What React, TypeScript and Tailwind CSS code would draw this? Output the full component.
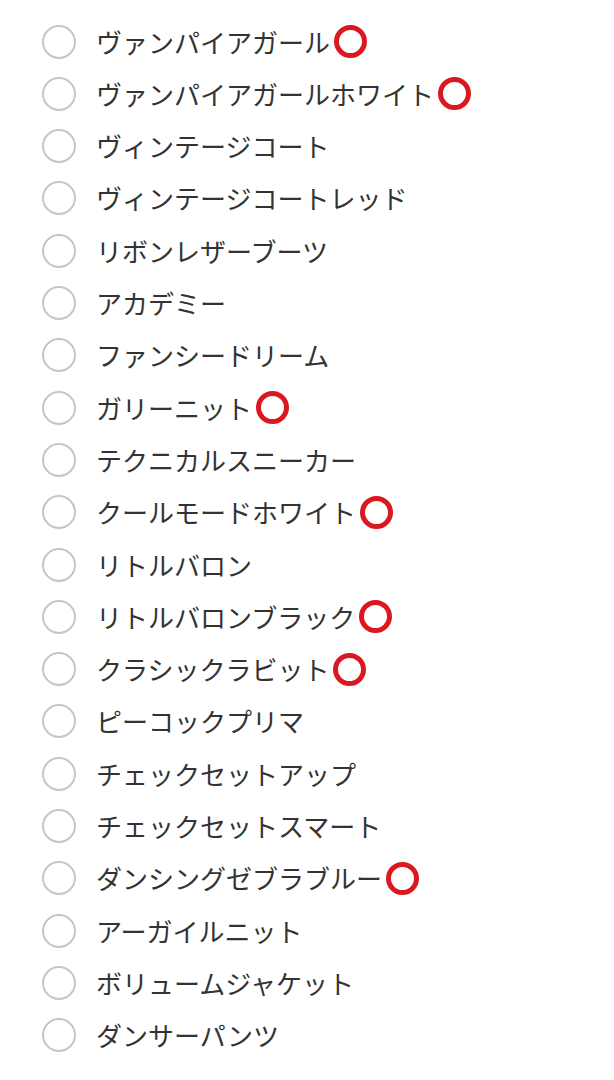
import React from "react";

const items: [string, boolean][] = [
  ["ヴァンパイアガール", true],
  ["ヴァンパイアガールホワイト", true],
  ["ヴィンテージコート", false],
  ["ヴィンテージコートレッド", false],
  ["リボンレザーブーツ", false],
  ["アカデミー", false],
  ["ファンシードリーム", false],
  ["ガリーニット", true],
  ["テクニカルスニーカー", false],
  ["クールモードホワイト", true],
  ["リトルバロン", false],
  ["リトルバロンブラック", true],
  ["クラシックラビット", true],
  ["ピーコックプリマ", false],
  ["チェックセットアップ", false],
  ["チェックセットスマート", false],
  ["ダンシングゼブラブルー", true],
  ["アーガイルニット", false],
  ["ボリュームジャケット", false],
  ["ダンサーパンツ", false],
];

export default function App() {
  return (
    <div
      className="w-[614px] h-[1080px] bg-white overflow-hidden pt-[15.4px]"
      style={{ fontFamily: '"Noto Sans CJK JP", "Noto Sans", sans-serif' }}
    >
      {items.map(([label, mark]) => (
        <div key={label} className="flex items-center h-[52.3px] pl-[42px]">
          <span className="w-[34px] h-[34px] rounded-full border-2 border-[#c6c6c6] shrink-0" />
          <span className="ml-[20px] text-[26px] leading-none text-[#333333] whitespace-nowrap">
            {label}
          </span>
          {mark && (
            <span className="ml-[4px] w-[33px] h-[33px] rounded-full border-[5.5px] border-[#da1820] shrink-0" />
          )}
        </div>
      ))}
    </div>
  );
}
